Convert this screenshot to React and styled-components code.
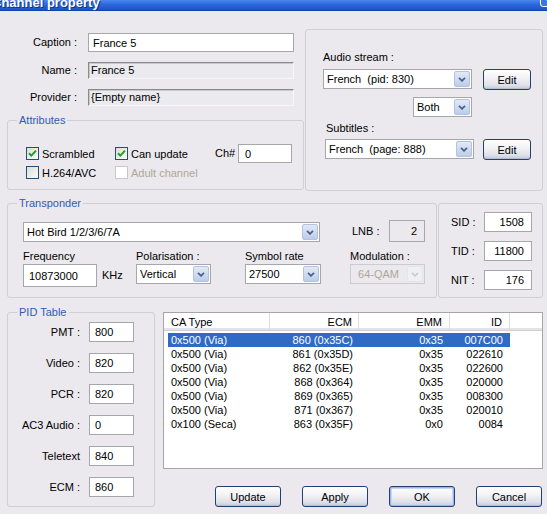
import React from "react";
import styled, { createGlobalStyle } from "styled-components";

const GlobalStyle = createGlobalStyle`
  html, body {
    margin: 0;
    padding: 0;
    background: #ebe9ed;
  }
  body {
    font-family: "Liberation Sans", Arial, sans-serif;
    font-size: 11px;
    color: #000;
  }
`;

const Window = styled.div`
  width: 547px;
  height: 514px;
  overflow: hidden;
  background: #ebe9ed;
  display: flex;
  flex-direction: column;
`;

// Title bar (cut at the top of the shot)
const TitleBar = styled.div`
  height: 11px;
  flex: none;
  display: flex;
  overflow: hidden;
  background: linear-gradient(#4a88ee, #2a64dc 50%, #1d52c6);
  border-bottom: 1px solid #1641a8;
  box-sizing: border-box;
`;

const TitleText = styled.div`
  margin: -4px 0 0 -8px;
  font-size: 13px;
  line-height: 13px;
  font-weight: bold;
  color: #fff;
  white-space: nowrap;
  text-shadow: 1px 1px 0 #0c2f8a;
`;

const CloseBox = styled.div`
  margin: -11px -13px 0 auto;
  width: 20px;
  height: 18px;
  flex: none;
  box-sizing: border-box;
  border: 1px solid #fff;
  border-radius: 3px;
  background: #3f75e2;
  color: #fff;
  font-weight: bold;
  font-size: 14px;
  line-height: 16px;
  text-align: center;
`;

// Group boxes
const GroupBox = styled.fieldset`
  margin: ${(p) => p.$mt || 0}px 0 0 0;
  padding: 0;
  min-inline-size: 0;
  width: ${(p) => p.$w}px;
  height: ${(p) => p.$h}px;
  box-sizing: border-box;
  border: 1px solid #d0ced6;
  border-radius: 3px;
  flex: none;
`;

const Legend = styled.legend`
  margin-left: 9px;
  padding: 0 2px;
  color: #2f5bb4;
  line-height: 13px;
`;

const Panel = styled.div`
  margin-top: ${(p) => p.$mt || 0}px;
  margin-left: ${(p) => p.$ml || 0}px;
  width: ${(p) => p.$w}px;
  height: ${(p) => p.$h}px;
  box-sizing: border-box;
  border: 1px solid #d0ced6;
  border-radius: 3px;
  flex: none;
`;

// Basic controls
const Label = styled.span`
  line-height: 13px;
  white-space: nowrap;
  text-align: ${(p) => p.$align || "left"};
  color: ${(p) => (p.$disabled ? "#aca899" : "#000")};
  margin-left: ${(p) => p.$ml || 0}px;
`;

const TextBox = styled.input`
  width: ${(p) => p.$w}px;
  height: ${(p) => p.$h || 20}px;
  box-sizing: border-box;
  margin: 0;
  padding: 0 ${(p) => (p.$align === "right" ? p.$pad ?? 6 : 0)}px 0
    ${(p) => (p.$align === "right" ? 0 : p.$pad ?? 4)}px;
  border: 1px solid #a5a7ad;
  border-radius: 0;
  background: #fff;
  font: inherit;
  color: #000;
  text-align: ${(p) => p.$align || "left"};
  outline: none;
  flex: none;
`;

const SunkenBox = styled.div`
  width: ${(p) => p.$w}px;
  height: 17px;
  box-sizing: border-box;
  border-top: 1px solid #8a8a8a;
  border-left: 1px solid #8a8a8a;
  border-right: 1px solid #f6f6f6;
  border-bottom: 1px solid #f6f6f6;
  box-shadow: inset 1px 1px 0 #c9c8cc;
  background: #ebeaee;
  padding-left: 2px;
  line-height: 15px;
  white-space: nowrap;
`;

const StaticBox = styled.div`
  width: ${(p) => p.$w}px;
  height: ${(p) => p.$h}px;
  box-sizing: border-box;
  border: 1px solid #a8a8ac;
  padding-right: 7px;
  display: flex;
  align-items: center;
  justify-content: flex-end;
  flex: none;
`;

const ComboFrame = styled.div`
  width: ${(p) => p.$w}px;
  height: 20px;
  box-sizing: border-box;
  display: flex;
  border: 1px solid ${(p) => (p.$disabled ? "#cdcbd2" : "#a5a7ad")};
  background: ${(p) => (p.$disabled ? "#ebe9ed" : "#fff")};
  color: ${(p) => (p.$disabled ? "#aca899" : "#000")};
  flex: none;
  margin-left: ${(p) => p.$ml || 0}px;
`;

const ComboText = styled.span`
  flex: 1;
  display: flex;
  align-items: center;
  justify-content: ${(p) => (p.$center ? "center" : "flex-start")};
  padding-left: ${(p) => (p.$center ? 0 : 3)}px;
  white-space: pre;
  overflow: hidden;
`;

const DropButton = styled.span`
  width: 16px;
  margin: 1px;
  box-sizing: border-box;
  border: 1px solid ${(p) => (p.$disabled ? "#e2e5ec" : "#b2c2e0")};
  border-radius: 2px;
  background: ${(p) =>
    p.$disabled ? "#eef0f4" : "linear-gradient(#e2e9f7, #bccdea)"};
  display: flex;
  align-items: center;
  justify-content: center;
`;

const Combo = ({ w, text, disabled, center, ml }) => (
  <ComboFrame $w={w} $disabled={disabled} $ml={ml}>
    <ComboText $center={center}>{text}</ComboText>
    <DropButton $disabled={disabled}>
      <svg width="8" height="5" viewBox="0 0 8 5">
        <path
          d="M1 0.8 L4 3.8 L7 0.8"
          fill="none"
          stroke={disabled ? "#c9cdd8" : "#4d6185"}
          strokeWidth="1.8"
        />
      </svg>
    </DropButton>
  </ComboFrame>
);

const CheckRow = styled.label`
  display: flex;
  align-items: center;
  gap: 3px;
  color: ${(p) => (p.$disabled ? "#aca899" : "#000")};
  white-space: nowrap;
`;

const CheckSquare = styled.span`
  width: 13px;
  height: 13px;
  box-sizing: border-box;
  flex: none;
  border: 1px solid ${(p) => (p.$disabled ? "#cac8cf" : "#1c5180")};
  background: ${(p) =>
    p.$disabled ? "#fff" : "linear-gradient(135deg, #dcdcd7, #fbfbf9)"};
  display: flex;
  align-items: center;
  justify-content: center;
`;

const CheckBox = ({ checked, disabled, children }) => (
  <CheckRow $disabled={disabled}>
    <CheckSquare $disabled={disabled}>
      {checked && (
        <svg width="9" height="9" viewBox="0 0 9 9">
          <path
            d="M1 4.2 L3.3 6.6 L8 1.6"
            fill="none"
            stroke="#21a121"
            strokeWidth="2"
          />
        </svg>
      )}
    </CheckSquare>
    {children}
  </CheckRow>
);

const Button = styled.button`
  width: ${(p) => p.$w || 66}px;
  height: 21px;
  box-sizing: border-box;
  margin: 0 0 0 ${(p) => p.$ml || 0}px;
  padding: 0;
  flex: none;
  font: inherit;
  color: #000;
  border: 1px solid #24406e;
  border-radius: 3px;
  background: linear-gradient(#ffffff, #f3f3f6 40%, #dfe0e9 80%, #c4c8d8);
  box-shadow: ${(p) =>
    p.$default
      ? "inset 0 0 0 1px #9cb5ea, inset 0 0 0 2px #c6d6f7"
      : "inset 0 -1px 0 #b9bdcf"};
`;

// Top area
const TopSection = styled.div`
  display: flex;
  align-items: flex-start;
  margin-top: 18px;
  padding-left: 7px;
`;

const LeftColumn = styled.div`
  width: 298px;
  display: flex;
  flex-direction: column;
`;

const FormGrid = styled.div`
  display: grid;
  grid-template-columns: 70px 206px;
  grid-template-rows: 19px 17px 17px;
  column-gap: 11px;
  row-gap: 10px;
  margin-top: 4px;
  align-items: center;
`;

const AttrGrid = styled.div`
  display: grid;
  grid-template-columns: 89px 100px 23px 54px;
  grid-template-rows: 19px 13px;
  row-gap: 3px;
  margin-top: 17px;
  padding-left: 18px;
  align-items: center;
`;

const StreamColumn = styled.div`
  display: flex;
  flex-direction: column;
  align-items: flex-start;
  padding: 21px 0 0 17px;
`;

const StreamRow = styled.div`
  display: flex;
  align-items: flex-start;
  margin-top: ${(p) => p.$mt || 0}px;
  margin-left: ${(p) => p.$ml || 0}px;
`;

// Middle area
const MiddleSection = styled.div`
  display: flex;
  align-items: flex-start;
  margin-top: 6px;
  padding-left: 7px;
`;

const TransGrid = styled.div`
  display: grid;
  grid-template-columns: 113px 109px 105px 80px;
  grid-template-rows: 22px 20px 23px;
  row-gap: 1px;
  margin-top: 10px;
  padding-left: 15px;
`;

const Cell = styled.div`
  display: flex;
  align-items: ${(p) => p.$align || "center"};
  grid-column: ${(p) => p.$span || "auto"};
`;

const IdGrid = styled.div`
  display: grid;
  grid-template-columns: 33px 48px;
  grid-auto-rows: 20px;
  row-gap: 9px;
  padding: 8px 0 0 12px;
  align-items: center;
`;

// Bottom area
const BottomSection = styled.div`
  display: flex;
  align-items: flex-start;
  margin-top: 8px;
  padding-left: 7px;
`;

const PidGrid = styled.div`
  display: grid;
  grid-template-columns: 72px 45px;
  grid-auto-rows: 20px;
  column-gap: 9px;
  row-gap: 11px;
  margin-top: 3px;
  align-items: center;
`;

const RightColumn = styled.div`
  display: flex;
  flex-direction: column;
  margin: 6px 0 0 8px;
  width: 380px;
`;

const ListView = styled.div`
  width: 380px;
  height: 157px;
  box-sizing: border-box;
  border: 1px solid #a5a5aa;
  background: #fff;
  overflow: hidden;
`;

const ListHeader = styled.div`
  display: flex;
  height: 18px;
  box-sizing: border-box;
  border-bottom: 1px solid #cfcfd5;
  box-shadow: inset 0 -2px 0 #e4e4e8;
  background: #fff;
`;

const HeaderCell = styled.div`
  width: ${(p) => p.$w}px;
  box-sizing: border-box;
  flex: none;
  display: flex;
  align-items: center;
  justify-content: ${(p) => (p.$align === "right" ? "flex-end" : "flex-start")};
  padding: 0 ${(p) => p.$pr || 0}px 0 ${(p) => p.$pl || 0}px;
  border-right: 1px solid #dcdce0;
  white-space: nowrap;
`;

const ListBody = styled.div`
  padding-top: 2px;
`;

const ListRow = styled.div`
  display: flex;
  height: 14px;
  margin-left: 4px;
  width: 342px;
  background: ${(p) => (p.$selected ? "#316ac5" : "transparent")};
  color: ${(p) => (p.$selected ? "#fff" : "#000")};
`;

const RowCell = styled.div`
  width: ${(p) => p.$w}px;
  box-sizing: border-box;
  flex: none;
  line-height: 14px;
  text-align: ${(p) => p.$align || "left"};
  padding: 0 ${(p) => p.$pr || 0}px 0 ${(p) => p.$pl || 0}px;
  white-space: nowrap;
`;

const ButtonRow = styled.div`
  display: flex;
  justify-content: flex-end;
  gap: 21px;
  margin-top: 17px;
  padding-right: 1px;
`;

const columns = [
  { title: "CA Type", w: 106, hw: 102, align: "left", pl: 3 },
  { title: "ECM", w: 89, align: "right", pr: 6 },
  { title: "EMM", w: 91, align: "right", pr: 7 },
  { title: "ID", w: 60, align: "right", pr: 7 },
];

const caRows = [
  ["0x500 (Via)", "860 (0x35C)", "0x35", "007C00"],
  ["0x500 (Via)", "861 (0x35D)", "0x35", "022610"],
  ["0x500 (Via)", "862 (0x35E)", "0x35", "022600"],
  ["0x500 (Via)", "868 (0x364)", "0x35", "020000"],
  ["0x500 (Via)", "869 (0x365)", "0x35", "008300"],
  ["0x500 (Via)", "871 (0x367)", "0x35", "020010"],
  ["0x100 (Seca)", "863 (0x35F)", "0x0", "0084"],
];

const pids = [
  ["PMT :", "800"],
  ["Video :", "820"],
  ["PCR :", "820"],
  ["AC3 Audio :", "0"],
  ["Teletext", "840"],
  ["ECM :", "860"],
];

export default function App() {
  return (
    <>
      <GlobalStyle />
      <Window>
        <TitleBar>
          <TitleText>Channel property</TitleText>
          <CloseBox>×</CloseBox>
        </TitleBar>

        {/* Names, attributes and streams */}
        <TopSection>
          <LeftColumn>
            <FormGrid>
              <Label $align="right">Caption :</Label>
              <TextBox $w={206} $h={19} $pad={4} defaultValue="France 5" />
              <Label $align="right">Name :</Label>
              <SunkenBox $w={206}>France 5</SunkenBox>
              <Label $align="right">Provider :</Label>
              <SunkenBox $w={206}>{"{Empty name}"}</SunkenBox>
            </FormGrid>
            <GroupBox $mt={8} $w={297} $h={76}>
              <Legend>Attributes</Legend>
              <AttrGrid>
                <CheckBox checked>Scrambled</CheckBox>
                <CheckBox checked>Can update</CheckBox>
                <Label>Ch#</Label>
                <TextBox $w={54} $h={19} $pad={6} defaultValue="0" />
                <CheckBox>H.264/AVC</CheckBox>
                <CheckBox disabled>Adult channel</CheckBox>
              </AttrGrid>
            </GroupBox>
          </LeftColumn>

          <Panel $w={238} $h={162}>
            <StreamColumn>
              <Label>Audio stream :</Label>
              <StreamRow $mt={5}>
                <Combo w={149} text="French  (pid: 830)" />
                <Button $w={48} $ml={11}>Edit</Button>
              </StreamRow>
              <StreamRow $mt={7} $ml={90}>
                <Combo w={59} text="Both" />
              </StreamRow>
              <StreamRow $mt={5} $ml={3}>
                <Label>Subtitles :</Label>
              </StreamRow>
              <StreamRow $mt={4} $ml={2}>
                <Combo w={149} text="French  (page: 888)" />
                <Button $w={48} $ml={9}>Edit</Button>
              </StreamRow>
            </StreamColumn>
          </Panel>
        </TopSection>

        {/* Transponder and stream ids */}
        <MiddleSection>
          <GroupBox $w={430} $h={101}>
            <Legend>Transponder</Legend>
            <TransGrid>
              <Cell $span="1 / 4" $align="flex-end">
                <Combo w={297} text="Hot Bird 1/2/3/6/7A" />
              </Cell>
              <Cell>
                <Label $ml={2}>LNB :</Label>
                <StaticBox $w={36} $h={22} style={{ marginLeft: "auto", marginRight: 5 }}>
                  2
                </StaticBox>
              </Cell>

              <Cell $align="flex-end"><Label>Frequency</Label></Cell>
              <Cell $align="flex-end"><Label>Polarisation :</Label></Cell>
              <Cell $align="flex-end"><Label>Symbol rate</Label></Cell>
              <Cell $align="flex-end"><Label>Modulation :</Label></Cell>

              <Cell $align="flex-start">
                <TextBox $w={74} $h={23} $pad={5} defaultValue="10873000" />
                <Label $ml={5} style={{ marginTop: 5 }}>KHz</Label>
              </Cell>
              <Cell $align="flex-start">
                <Combo w={75} text="Vertical" />
              </Cell>
              <Cell $align="flex-start">
                <Combo w={76} text="27500" />
              </Cell>
              <Cell $align="flex-start">
                <Combo w={75} text="64-QAM" disabled center />
              </Cell>
            </TransGrid>
          </GroupBox>

          <Panel $w={105} $h={95} $mt={6} $ml={1}>
            <IdGrid>
              <Label>SID :</Label>
              <TextBox $w={48} $align="right" $pad={7} defaultValue="1508" />
              <Label>TID :</Label>
              <TextBox $w={48} $align="right" $pad={7} defaultValue="11800" />
              <Label>NIT :</Label>
              <TextBox $w={48} $align="right" $pad={7} defaultValue="176" />
            </IdGrid>
          </Panel>
        </MiddleSection>

        {/* PID table, CA list and buttons */}
        <BottomSection>
          <GroupBox $w={148} $h={201}>
            <Legend>PID Table</Legend>
            <PidGrid>
              {pids.map(([name, value]) => (
                <React.Fragment key={name}>
                  <Label $align="right">{name}</Label>
                  <TextBox $w={45} $pad={5} defaultValue={value} />
                </React.Fragment>
              ))}
            </PidGrid>
          </GroupBox>

          <RightColumn>
            <ListView>
              <ListHeader>
                {columns.map((c) => (
                  <HeaderCell
                    key={c.title}
                    $w={c.w}
                    $align={c.align}
                    $pl={c.pl ? c.pl + 4 : 0}
                    $pr={c.pr}
                  >
                    {c.title}
                  </HeaderCell>
                ))}
              </ListHeader>
              <ListBody>
                {caRows.map((row, i) => (
                  <ListRow key={i} $selected={i === 0}>
                    {row.map((value, j) => (
                      <RowCell
                        key={j}
                        $w={columns[j].hw || columns[j].w}
                        $align={columns[j].align}
                        $pl={columns[j].pl}
                        $pr={columns[j].pr}
                      >
                        {value}
                      </RowCell>
                    ))}
                  </ListRow>
                ))}
              </ListBody>
            </ListView>
            <ButtonRow>
              <Button>Update</Button>
              <Button>Apply</Button>
              <Button $default>OK</Button>
              <Button>Cancel</Button>
            </ButtonRow>
          </RightColumn>
        </BottomSection>
      </Window>
    </>
  );
}
